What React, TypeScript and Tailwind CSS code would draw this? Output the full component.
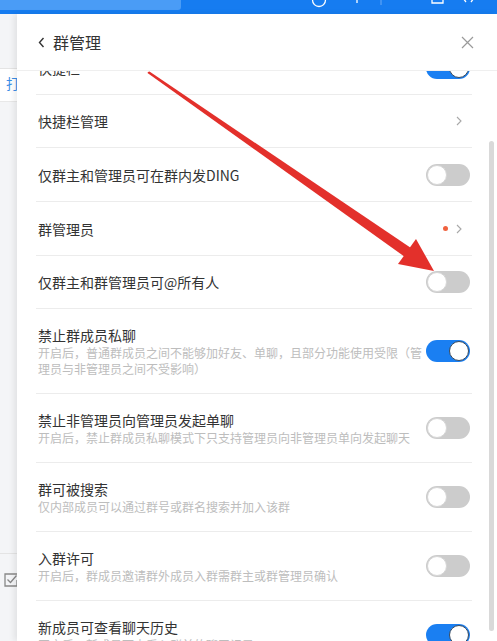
import React from 'react';

type Row = {
  title: string;
  desc?: string;
  kind: 'toggle' | 'link';
  on?: boolean;
  dot?: boolean;
  h: string;
};

const rows: Row[] = [
  { title: '快捷栏', kind: 'toggle', on: true, h: 'h-[53px]' },
  { title: '快捷栏管理', kind: 'link', h: 'h-[53px]' },
  { title: '仅群主和管理员可在群内发DING', kind: 'toggle', on: false, h: 'h-[54px]' },
  { title: '群管理员', kind: 'link', dot: true, h: 'h-[54px]' },
  { title: '仅群主和群管理员可@所有人', kind: 'toggle', on: false, h: 'h-[53px]' },
  {
    title: '禁止群成员私聊',
    desc: '开启后，普通群成员之间不能够加好友、单聊，且部分功能使用受限（管理员与非管理员之间不受影响）',
    kind: 'toggle',
    on: true,
    h: 'h-[85px]',
  },
  {
    title: '禁止非管理员向管理员发起单聊',
    desc: '开启后，禁止群成员私聊模式下只支持管理员向非管理员单向发起聊天',
    kind: 'toggle',
    on: false,
    h: 'h-[69px]',
  },
  { title: '群可被搜索', desc: '仅内部成员可以通过群号或群名搜索并加入该群', kind: 'toggle', on: false, h: 'h-[69px]' },
  { title: '入群许可', desc: '开启后，群成员邀请群外成员入群需群主或群管理员确认', kind: 'toggle', on: false, h: 'h-[69px]' },
  { title: '新成员可查看聊天历史', desc: '开启后，新成员可查看入群前的聊天记录', kind: 'toggle', on: true, h: 'h-[69px]' },
];

function Toggle({ on }: { on?: boolean }) {
  return (
    <div
      className={`flex h-[22px] w-[44px] shrink-0 items-center rounded-full p-px ${
        on ? 'justify-end bg-[#1a7ff2]' : 'justify-start bg-[#cccccc]'
      }`}
    >
      <div
        className={`h-[20px] w-[20px] rounded-full bg-white ${
          on ? 'border border-[#3c4a5a]' : 'border border-[#d6d6d6]'
        }`}
      />
    </div>
  );
}

function Chevron() {
  return (
    <svg width="6" height="10" viewBox="0 0 6 10" className="shrink-0">
      <path d="M1 1l4 4-4 4" fill="none" stroke="#a8a8a8" strokeWidth="1.1" />
    </svg>
  );
}

function SettingRow({ row }: { row: Row }) {
  return (
    <div className={`flex ${row.h} items-center justify-between border-b border-[#ececec] pl-[2px] pr-[2px]`}>
      <div className="w-[384px]">
        <div className="text-[14px] leading-[20px] text-[#333333]">{row.title}</div>
        {row.desc && <div className="text-[12px] leading-[16px] text-[#bdbdbd]">{row.desc}</div>}
      </div>
      {row.kind === 'toggle' ? (
        <Toggle on={row.on} />
      ) : (
        <div className="flex items-center gap-[8px] pr-[8px]">
          {row.dot && <div className="h-[5px] w-[5px] rounded-full bg-[#f0623f]" />}
          <Chevron />
        </div>
      )}
    </div>
  );
}

export default function App() {
  return (
    <div
      className="relative flex h-[641px] w-[497px] flex-col overflow-hidden bg-white"
      style={{ fontFamily: '"Noto Sans CJK SC", "Noto Sans", sans-serif' }}
    >
      {/* window title bar */}
      <div className="flex h-[14px] shrink-0 bg-[#167cf0]">
        <div className="h-[10px] w-[181px] rounded-br-[3px] bg-[#4a9cf6]" />
        <svg width="316" height="14" viewBox="0 0 316 14" className="shrink-0">
          <circle cx="138" cy="0" r="6.5" fill="none" stroke="#fff" strokeWidth="1.3" />
          <line x1="176" y1="0" x2="176" y2="3" stroke="#fff" strokeWidth="1.3" />
          <line x1="200" y1="0" x2="200" y2="5" stroke="#6aa9f5" strokeWidth="1" />
          <path d="M251 0v3h11V0" fill="none" stroke="#fff" strokeWidth="1.3" />
          <path d="M282 -2l3 4M293 -2l-3 4" fill="none" stroke="#fff" strokeWidth="1.3" />
        </svg>
      </div>

      <div className="flex min-h-0 flex-1">
        {/* left edge of chat window behind */}
        <div className="flex w-[17px] shrink-0 flex-col overflow-hidden bg-[#f4f5f7]">
          <div className="h-[55px] shrink-0 border-b border-[#e4e4e4]" />
          <div className="h-[33px] shrink-0 whitespace-nowrap border-b border-[#e8e8e8] bg-white pl-[6px] pt-[4px] text-[14px] leading-[20px] text-[#3a8ee6]">
            打开
          </div>
          <div className="flex-1" />
          <div className="h-[88px] shrink-0 border-t border-[#e4e4e4] pl-[4px] pt-[19px]">
            <svg width="14" height="14" viewBox="0 0 14 14">
              <path d="M13 1H1v12h12V7" fill="none" stroke="#888" strokeWidth="1.3" />
              <path d="M3.5 6.5l3 3 6-7" fill="none" stroke="#888" strokeWidth="1.3" />
            </svg>
          </div>
        </div>

        {/* group management panel */}
        <div className="relative z-10 flex min-w-0 flex-1 flex-col bg-white shadow-[-3px_0_6px_rgba(0,0,0,0.08)]">
          <div className="flex h-[57px] shrink-0 items-center justify-between border-b border-[#efefef] pl-[21px] pr-[23px]">
            <div className="flex items-center gap-[8px]">
              <svg width="7" height="11" viewBox="0 0 7 11">
                <path d="M5.5 1L1.5 5.5l4 4.5" fill="none" stroke="#333" strokeWidth="1.4" />
              </svg>
              <span className="text-[16px] leading-[22px] text-[#333333]">群管理</span>
            </div>
            <svg width="13" height="13" viewBox="0 0 13 13">
              <path d="M1 1l11 11M12 1L1 12" fill="none" stroke="#9a9a9a" strokeWidth="1.2" />
            </svg>
          </div>

          <div className="flex min-h-0 flex-1 overflow-hidden">
            <div className="min-w-0 flex-1 pl-[19px] pr-[15px]">
              <div className="-mt-[29px]">
                {rows.map((r) => (
                  <SettingRow key={r.title} row={r} />
                ))}
              </div>
            </div>
            <div className="w-[10px] shrink-0 pl-[2px] pt-[70px]">
              <div className="h-[490px] w-[5px] rounded-full bg-[#d9d9d9]" />
            </div>
          </div>
        </div>
      </div>

      {/* red annotation arrow */}
      <svg
        className="pointer-events-none absolute left-0 top-0 z-20"
        width="497"
        height="641"
        viewBox="0 0 497 641"
      >
        <polygon points="148,72 149.5,71.5 411,248 405,257 147.5,73" fill="#e3302b" />
        <polygon points="434,271 416,239 398,264" fill="#e3302b" />
      </svg>
    </div>
  );
}
